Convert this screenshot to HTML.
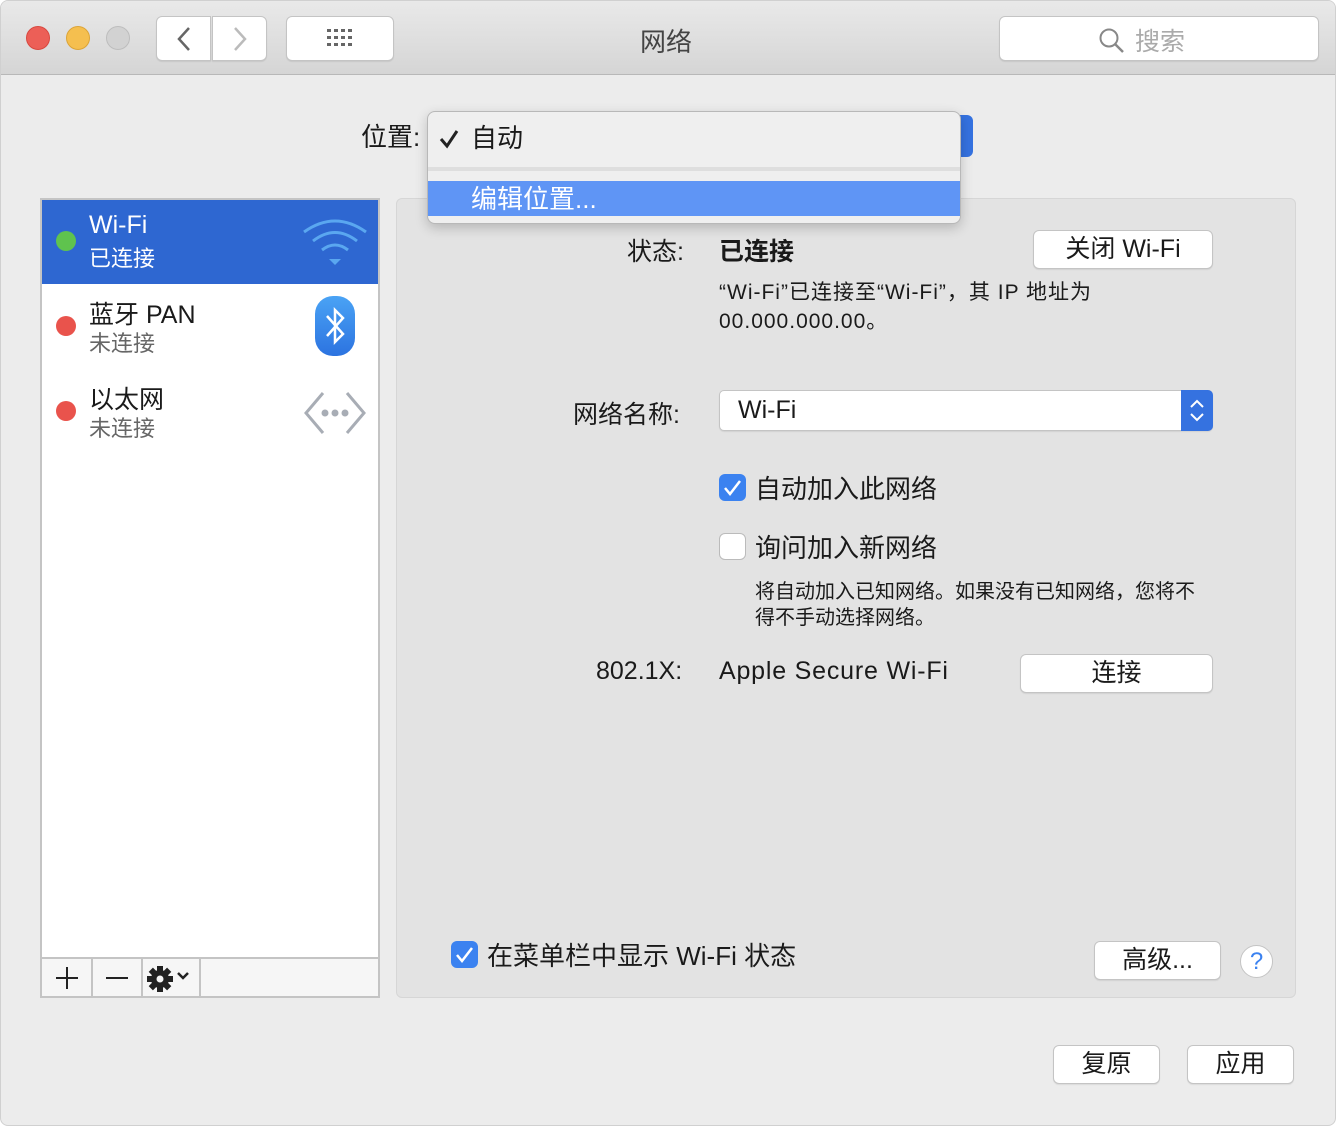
<!DOCTYPE html>
<html><head><meta charset="utf-8"><style>
*{box-sizing:border-box;margin:0;padding:0}
body{width:1336px;height:1126px;background:#fff;font-family:"Liberation Sans","Noto Sans CJK SC",sans-serif;color:#1a1a1a;position:relative;overflow:hidden}
.win{position:absolute;left:0;top:0;width:1336px;height:1126px;background:#ececec;border:1px solid #d0d0d0;border-radius:8px;overflow:hidden}
.tb{position:absolute;left:0;top:0;width:100%;height:74px;background:linear-gradient(#e9e9e9,#d5d5d5);border-bottom:1px solid #b8b8b8}
.a{position:absolute}
.dot{position:absolute;width:24px;height:24px;border-radius:50%}
.btn{position:absolute;background:#fff;border:1px solid #c4c4c4;border-radius:6px;box-shadow:0 1px 1px rgba(0,0,0,.08);text-align:center;font-size:26px}
.t{position:absolute;white-space:nowrap}
.cb{position:absolute;width:27px;height:27px;border-radius:6px}
</style></head><body><div class="win">
<div class="tb">
<div class="dot" style="left:25px;top:25px;background:#ec5f57;border:1px solid #d8483f"></div>
<div class="dot" style="left:65px;top:25px;background:#f5bf4f;border:1px solid #dca437"></div>
<div class="dot" style="left:105px;top:25px;background:#d2d2d2;border:1px solid #bdbdbd"></div>
<div class="btn" style="left:155px;top:15px;width:55px;height:45px;border-radius:6px 0 0 6px"><svg width="55" height="45"><path d="M32 11 L22 22 L32 33" stroke="#666" stroke-width="2.5" fill="none"/></svg></div>
<div class="btn" style="left:211px;top:15px;width:55px;height:45px;border-radius:0 6px 6px 0"><svg width="55" height="45"><path d="M22 11 L32 22 L22 33" stroke="#bbb" stroke-width="2.5" fill="none"/></svg></div>
<div class="btn" style="left:285px;top:15px;width:108px;height:45px"><svg width="108" height="45"><g fill="#666"><rect x="40" y="12" width="4" height="3"/><rect x="47" y="12" width="4" height="3"/><rect x="54" y="12" width="4" height="3"/><rect x="61" y="12" width="4" height="3"/><rect x="40" y="19" width="4" height="3"/><rect x="47" y="19" width="4" height="3"/><rect x="54" y="19" width="4" height="3"/><rect x="61" y="19" width="4" height="3"/><rect x="40" y="26" width="4" height="3"/><rect x="47" y="26" width="4" height="3"/><rect x="54" y="26" width="4" height="3"/><rect x="61" y="26" width="4" height="3"/></g></svg></div>
<div class="t" style="left:639px;top:21px;font-size:26px;color:#444">网络</div>
<div class="btn" style="left:998px;top:15px;width:320px;height:45px;color:#aaa"><svg class="a" style="left:98px;top:10px" width="28" height="28"><circle cx="11" cy="11" r="8.5" stroke="#888" stroke-width="2" fill="none"/><path d="M17 17 L25 25" stroke="#888" stroke-width="2.5"/></svg><span class="t" style="left:135px;top:5px;font-size:25px">搜索</span></div>
</div>
<div class="t" style="left:360px;top:116px;font-size:26px">位置:</div>
<div class="a" style="left:940px;top:114px;width:32px;height:42px;background:#3572e0;border-radius:6px"></div>
<!-- sidebar -->
<div class="a" style="left:39px;top:197px;width:340px;height:800px;background:#fff;border:2px solid #c4c4c4"></div>
<div class="a" style="left:41px;top:199px;width:336px;height:84px;background:#2e67d1"></div>
<div class="dot" style="left:55px;top:230px;width:20px;height:20px;background:#5fc34e"></div>
<div class="t" style="left:88px;top:210px;font-size:25px;color:#fff">Wi-Fi</div>
<div class="t" style="left:88px;top:240px;font-size:22px;color:#fff">已连接</div>
<svg class="a" style="left:300px;top:215px" width="68" height="52"><g stroke="#5aa7f0" stroke-width="3" fill="none"><path d="M3 16 Q34 -6 65 16"/><path d="M12 25 Q34 8 56 25"/><path d="M21 34 Q34 24 47 34"/></g><path d="M28 43 L40 43 L34 49Z" fill="#5aa7f0"/></svg>
<div class="dot" style="left:55px;top:315px;width:20px;height:20px;background:#e9534c"></div>
<div class="t" style="left:88px;top:294px;font-size:25px">蓝牙 PAN</div>
<div class="t" style="left:88px;top:325px;font-size:22px;color:#666">未连接</div>
<div class="a" style="left:314px;top:295px;width:40px;height:60px;border-radius:18px;background:linear-gradient(#4aa3f5,#2c73e0)"></div>
<svg class="a" style="left:314px;top:295px" width="40" height="60"><path d="M12 20 L28 38 L20 46 L20 14 L28 22 L12 40" stroke="#fff" stroke-width="2.5" fill="none"/></svg>
<div class="dot" style="left:55px;top:400px;width:20px;height:20px;background:#e9534c"></div>
<div class="t" style="left:88px;top:379px;font-size:25px">以太网</div>
<div class="t" style="left:88px;top:410px;font-size:22px;color:#666">未连接</div>
<svg class="a" style="left:302px;top:390px" width="64" height="44"><g stroke="#a8adb5" stroke-width="3" fill="none"><path d="M20 2 L3 22 L20 42"/><path d="M44 2 L61 22 L44 42"/></g><g fill="#a8adb5"><circle cx="22" cy="22" r="3.5"/><circle cx="32" cy="22" r="3.5"/><circle cx="42" cy="22" r="3.5"/></g></svg>
<div class="a" style="left:41px;top:956px;width:336px;height:39px;background:#f6f6f6;border-top:2px solid #c4c4c4"></div>
<div class="a" style="left:90px;top:956px;width:2px;height:40px;background:#c4c4c4"></div>
<div class="a" style="left:140px;top:956px;width:2px;height:40px;background:#c4c4c4"></div>
<div class="a" style="left:198px;top:956px;width:2px;height:40px;background:#c4c4c4"></div>
<svg class="a" style="left:54px;top:965px" width="24" height="24"><path d="M12 1 V23 M1 12 H23" stroke="#222" stroke-width="2"/></svg>
<div class="a" style="left:105px;top:976px;width:22px;height:2px;background:#222"></div>
<svg class="a" style="left:145px;top:964px" width="28" height="28"><g fill="#222" transform="translate(14 14)"><circle r="9"/><rect x="-3" y="-13" width="6" height="26"/><rect x="-3" y="-13" width="6" height="26" transform="rotate(45)"/><rect x="-3" y="-13" width="6" height="26" transform="rotate(90)"/><rect x="-3" y="-13" width="6" height="26" transform="rotate(135)"/></g><circle cx="14" cy="14" r="3.5" fill="#f6f6f6"/></svg>
<svg class="a" style="left:175px;top:970px" width="14" height="10"><path d="M2 2 L7 7 L12 2" stroke="#222" stroke-width="2.5" fill="none"/></svg>
<!-- main panel -->
<div class="a" style="left:395px;top:197px;width:900px;height:800px;background:#e3e3e3;border:1px solid #d6d6d6;border-radius:6px"></div>
<div class="t" style="left:626px;top:231px;font-size:25px">状态:</div>
<div class="t" style="left:718px;top:231px;font-size:25px;font-weight:bold">已连接</div>
<div class="btn" style="left:1032px;top:229px;width:180px;height:39px;line-height:36px;font-size:25px">关闭 Wi-Fi</div>
<div class="t" style="left:718px;top:275px;font-size:21px;letter-spacing:1px">“Wi-Fi”已连接至“Wi-Fi”，其 IP 地址为</div>
<div class="t" style="left:718px;top:304px;font-size:21px;letter-spacing:1px">00.000.000.00。</div>
<div class="t" style="left:572px;top:394px;font-size:25px">网络名称:</div>
<div class="btn" style="left:718px;top:389px;width:494px;height:41px;text-align:left;padding-left:18px;line-height:39px;font-size:25px;border-radius:5px">Wi-Fi</div>
<div class="a" style="left:1180px;top:389px;width:32px;height:41px;background:#3572e0;border-radius:0 5px 5px 0"></div>
<svg class="a" style="left:1180px;top:389px" width="32" height="41"><g stroke="#fff" stroke-width="2" fill="none"><path d="M10 17 L16 11 L22 17"/><path d="M10 24 L16 30 L22 24"/></g></svg>
<div class="cb" style="left:718px;top:473px;background:#3b82f0"></div>
<svg class="a" style="left:718px;top:473px" width="27" height="27"><path d="M6 14 L11 20 L21 7" stroke="#fff" stroke-width="2.5" fill="none"/></svg>
<div class="t" style="left:754px;top:468px;font-size:26px">自动加入此网络</div>
<div class="cb" style="left:718px;top:532px;background:#fff;border:1px solid #bbb"></div>
<div class="t" style="left:754px;top:527px;font-size:26px">询问加入新网络</div>
<div class="t" style="left:754px;top:574px;font-size:20px">将自动加入已知网络。如果没有已知网络，您将不</div>
<div class="t" style="left:754px;top:600px;font-size:20px">得不手动选择网络。</div>
<div class="t" style="left:595px;top:656px;font-size:25px">802.1X:</div>
<div class="t" style="left:718px;top:656px;font-size:25px;letter-spacing:0.8px">Apple Secure Wi-Fi</div>
<div class="btn" style="left:1019px;top:653px;width:193px;height:39px;line-height:36px;font-size:25px">连接</div>
<div class="cb" style="left:450px;top:940px;background:#3b82f0"></div>
<svg class="a" style="left:450px;top:940px" width="27" height="27"><path d="M6 14 L11 20 L21 7" stroke="#fff" stroke-width="2.5" fill="none"/></svg>
<div class="t" style="left:486px;top:935px;font-size:26px">在菜单栏中显示 Wi-Fi 状态</div>
<div class="btn" style="left:1093px;top:940px;width:127px;height:39px;line-height:36px;font-size:25px">高级...</div>
<div class="a" style="left:1239px;top:944px;width:33px;height:33px;border-radius:50%;background:#fff;border:1px solid #c4c4c4;color:#3b82f0;font-size:24px;text-align:center;line-height:31px">?</div>
<div class="btn" style="left:1052px;top:1044px;width:107px;height:39px;line-height:36px;font-size:25px">复原</div>
<div class="btn" style="left:1186px;top:1044px;width:107px;height:39px;line-height:36px;font-size:25px">应用</div>
<!-- dropdown menu -->
<div class="a" style="left:426px;top:110px;width:534px;height:113px;background:#efefef;border:1px solid #b8b8b8;border-radius:8px;box-shadow:0 4px 12px rgba(0,0,0,.2);overflow:hidden">
<svg class="a" style="left:10px;top:16px" width="22" height="22"><path d="M3 11 L9 18 L19 3" stroke="#222" stroke-width="3" fill="none"/></svg>
<div class="a" style="left:0;top:55px;width:100%;height:4px;background:#dedede"></div>
<div class="a" style="left:0;top:69px;width:100%;height:35px;background:#5f95f5"></div>
<div class="t" style="left:43px;top:6px;font-size:26px">自动</div>
<div class="t" style="left:43px;top:67px;font-size:26px;color:#fff">编辑位置...</div>
</div>
</div></body></html>
